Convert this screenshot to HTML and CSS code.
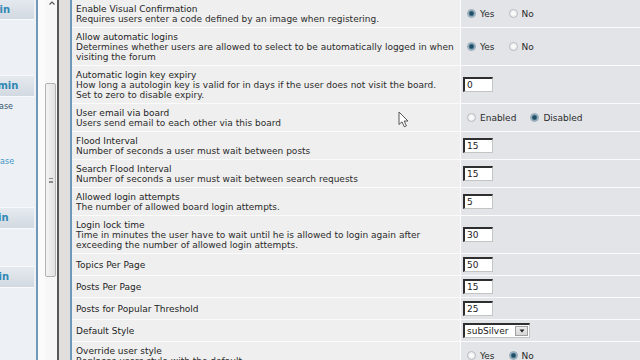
FILE: index.html
```html
<!DOCTYPE html>
<html lang="en">
<head>
<meta charset="utf-8">
<title>Board Configuration</title>
<link rel="stylesheet" href="styles.css">
</head>
<body>
<div class="page">
  <aside class="navframe">
    <nav class="nav">
      <div class="nav-inner">
        <div class="nav-head">Forum Admin</div>
        <div class="nav-link"></div>
        <div class="nav-link"></div>
        <div class="nav-link"></div>
        <div class="nav-head">General Admin</div>
        <div class="nav-link dark">Backup Database</div>
        <div class="nav-link"></div>
        <div class="nav-link"></div>
        <div class="nav-link light">Restore Database</div>
        <div class="nav-link"></div>
        <div class="nav-link"></div>
        <div class="nav-head">Group Admin</div>
        <div class="nav-link"></div>
        <div class="nav-link"></div>
        <div class="nav-head">Styles Admin</div>
      </div>
    </nav>
    <div class="navgap"></div>
    <div class="scrollbar">
      <svg class="arrow" width="8" height="6" viewBox="0 0 8 6"><path d="M1.5 4.5 L4 2 L6.5 4.5" fill="none" stroke="#555" stroke-width="1.2"/></svg>
      <div class="thumb"><span class="grip"></span></div>
    </div>
  </aside>
  <div class="divider"></div>
  <main class="main">
    <div class="forumline">
      <div class="label"><div class="t">Enable Visual Confirmation</div><div class="d">Requires users enter a code defined by an image when registering.</div></div>
      <div class="field"><span class="opt"><span class="radio on"></span>Yes</span><span class="opt next"><span class="radio"></span>No</span></div>

      <div class="label"><div class="t">Allow automatic logins</div><div class="d">Determines whether users are allowed to select to be automatically logged in when visiting the forum</div></div>
      <div class="field"><span class="opt"><span class="radio on"></span>Yes</span><span class="opt next"><span class="radio"></span>No</span></div>

      <div class="label"><div class="t">Automatic login key expiry</div><div class="d">How long a autologin key is valid for in days if the user does not visit the board.<br>Set to zero to disable expiry.</div></div>
      <div class="field"><input class="box" type="text" value="0"></div>

      <div class="label"><div class="t">User email via board</div><div class="d">Users send email to each other via this board</div></div>
      <div class="field"><span class="opt"><span class="radio"></span>Enabled</span><span class="opt next"><span class="radio on"></span>Disabled</span></div>

      <div class="label"><div class="t">Flood Interval</div><div class="d">Number of seconds a user must wait between posts</div></div>
      <div class="field"><input class="box" type="text" value="15"></div>

      <div class="label"><div class="t">Search Flood Interval</div><div class="d">Number of seconds a user must wait between search requests</div></div>
      <div class="field"><input class="box" type="text" value="15"></div>

      <div class="label"><div class="t">Allowed login attempts</div><div class="d">The number of allowed board login attempts.</div></div>
      <div class="field"><input class="box" type="text" value="5"></div>

      <div class="label"><div class="t">Login lock time</div><div class="d">Time in minutes the user have to wait until he is allowed to login again after exceeding the number of allowed login attempts.</div></div>
      <div class="field"><input class="box" type="text" value="30"></div>

      <div class="label"><div class="t">Topics Per Page</div></div>
      <div class="field"><input class="box" type="text" value="50"></div>

      <div class="label"><div class="t">Posts Per Page</div></div>
      <div class="field"><input class="box" type="text" value="15"></div>

      <div class="label"><div class="t">Posts for Popular Threshold</div></div>
      <div class="field"><input class="box" type="text" value="25"></div>

      <div class="label"><div class="t">Default Style</div></div>
      <div class="field"><div class="select"><span class="sel-text">subSilver</span><span class="sel-btn"><svg width="6" height="4" viewBox="0 0 6 4"><path d="M0.5 0.5 H5.5 L3 3.5 Z" fill="#222"/></svg></span></div></div>

      <div class="label"><div class="t">Override user style</div><div class="d">Replaces users style with the default</div></div>
      <div class="field"><span class="opt"><span class="radio"></span>Yes</span><span class="opt next"><span class="radio on"></span>No</span></div>
    </div>
  </main>
</div>
<svg class="cursor" width="12" height="18" viewBox="0 0 12 18"><path d="M1 1 L1 13.5 L4 10.8 L6.3 15.8 L8.4 14.9 L6.2 10 L10 10 Z" fill="#fff" stroke="#555" stroke-width="1" stroke-linejoin="round"/></svg>
</body>
</html>
```
FILE: styles.css
```css
* { box-sizing: border-box; }
html, body { margin: 0; padding: 0; }
body {
  width: 640px;
  height: 360px;
  overflow: hidden;
  position: relative;
  background: #e0dfdd;
  font-family: "DejaVu Sans", Verdana, sans-serif;
  color: #222;
}
.page { display: flex; height: 360px; }

/* left navigation frame */
.navframe { display: flex; flex: none; width: 57px; height: 360px; background: #fbfbfb; }
.nav {
  flex: none;
  width: 38px;
  height: 360px;
  background: #edf1f5;
  border-right: 2px solid #7198b7;
  overflow: hidden;
}
.nav-inner { width: 104px; margin-left: -70px; margin-top: -2px; }
.nav-head {
  height: 22px;
  display: flex;
  align-items: center;
  padding-left: 5px;
  white-space: nowrap;
  font-size: 10px;
  font-weight: bold;
  color: #3088b5;
  background: linear-gradient(#e5eaef, #d2d9e0);
  border-top: 1px solid #f7f9fb;
  border-bottom: 1px solid #f7f9fb;
}
.nav-link {
  height: 18.33px;
  display: flex;
  align-items: center;
  padding-left: 13px;
  white-space: nowrap;
  font-size: 8px;
}
.nav-link.dark { color: #35566f; }
.nav-link.light { color: #4597c8; }
.navgap { flex: none; width: 7px; background: #fbfbfb; }
.scrollbar {
  flex: none;
  width: 12px;
  display: flex;
  flex-direction: column;
  align-items: center;
  background: #f7f7f7;
}
.arrow { display: block; margin-top: 0; margin-left: 2px; }
.thumb {
  margin-top: 77px;
  width: 11px;
  height: 194px;
  margin-right: 1px;
  border: 1px solid #b3b3b3;
  border-radius: 2px;
  background: linear-gradient(90deg, #f3f3f3, #e2e2e2);
  display: flex;
  align-items: center;
  justify-content: center;
}
.grip {
  width: 4px;
  height: 5px;
  border-top: 1px solid #8a8a8a;
  border-bottom: 1px solid #8a8a8a;
  background: linear-gradient(#fff0 0 2px, #8a8a8a 2px 3px, #fff0 3px);
}
.divider { flex: none; width: 2px; background: #585858; }

/* main content frame */
.main { flex: 1; padding-left: 11px; background: #e0dfdd; overflow: hidden; }
.forumline {
  display: grid;
  grid-template-columns: 388px 1fr;
  gap: 1px;
  background: #fbfbfb;
  border-left: 2px solid #6b98bb;
}
.label {
  background: #efefef;
  padding: 4px 5px 3px 4px;
  display: flex;
  flex-direction: column;
  justify-content: center;
  font-size: 9px;
  line-height: 10px;
}
.t { color: #1e1e1e; }
.d { color: #2b2b2b; }
.field {
  background: #e2e4e8;
  padding: 3px 3px 3px 2px;
  display: flex;
  align-items: center;
  font-size: 9px;
  color: #2a2a2a;
}
.opt { display: inline-flex; align-items: center; margin-left: 4px; white-space: nowrap; }
.opt.next { margin-left: 14px; }
.radio {
  width: 9px;
  height: 9px;
  margin-right: 4px;
  border-radius: 50%;
  border: 1px solid #b4bcc3;
  background: radial-gradient(circle, #ffffff 0, #ecedee 70%);
}
.radio.on {
  border-color: #90a4b1;
  background: radial-gradient(circle, #234f66 0 1.6px, #5f8ba3 2.6px, #cad7df 3.6px);
}
.box {
  width: 30px;
  height: 15px;
  margin: 0;
  padding: 0 2px;
  border-style: solid;
  border-width: 2px 1px 1px 2px;
  border-color: #2e2e2e #c4c4c4 #c4c4c4 #2e2e2e;
  background: #fff;
  font-family: "DejaVu Sans", Verdana, sans-serif;
  font-size: 9px;
  color: #222;
}
.select {
  width: 67px;
  height: 15px;
  display: flex;
  border-style: solid;
  border-width: 2px 1px 1px 2px;
  border-color: #2e2e2e #c4c4c4 #c4c4c4 #2e2e2e;
  background: #fff;
}
.sel-text { flex: 1; padding-left: 2px; font-size: 9px; line-height: 12px; color: #222; }
.sel-btn {
  width: 13px;
  margin: 1px;
  display: flex;
  align-items: center;
  justify-content: center;
  background: linear-gradient(#ececec, #d6d6d6);
  border: 1px solid #a0a0a0;
}
.sel-btn svg { display: block; }
.cursor { position: absolute; left: 398px; top: 111px; }
```
